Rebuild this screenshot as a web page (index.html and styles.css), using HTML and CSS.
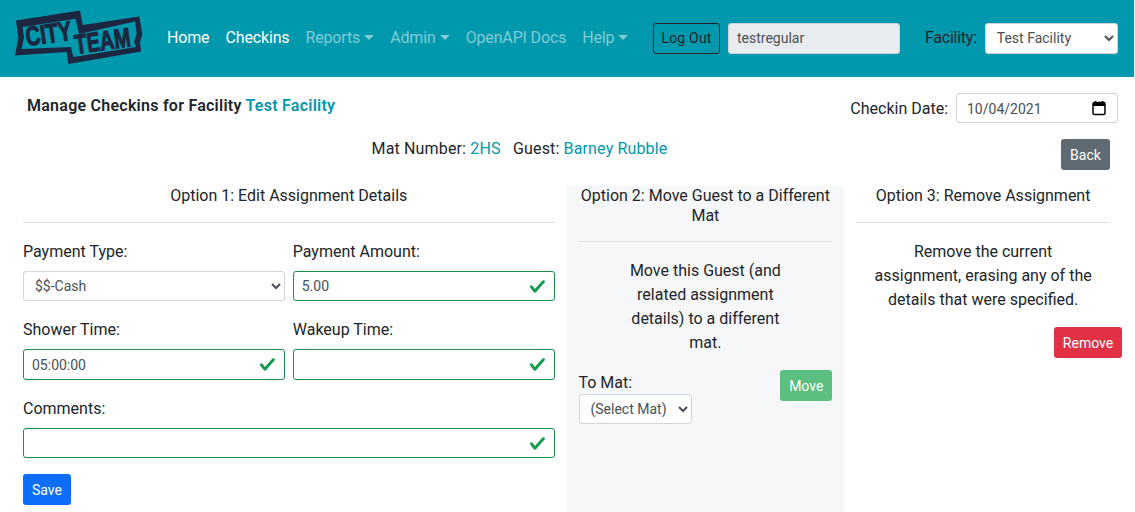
FILE: index.html
```html
<!DOCTYPE html>
<html>
<head>
    <meta charset="UTF-8">
    <title>Manage Checkins</title>
    <link rel="stylesheet" href="styles.css">
</head>
<body>
    <header class="topbar">
        <svg class="logo" width="130" height="55" viewBox="0 0 130 55">
            <path class="logo-dark" d="M2 10.5 L66 0.5 L68.7 15 L125.3 6.5 L128.3 24 L126 32 L127 41.5 L54.3 54 L52.7 42 L1 45.5 L4.3 28 Z"/>
            <path class="logo-light" d="M8.7 17 L61.7 8.8 L65 24 L121 11.5 L122.7 23.8 L120 32 L122 37 L59.3 47 L57 37 L7.7 39 L10 27 Z"/>
            <text class="logo-text" transform="translate(13 36) rotate(-8)" textLength="46" lengthAdjust="spacingAndGlyphs">CITY</text>
            <text class="logo-text" transform="translate(62 44) rotate(-8)" textLength="56" lengthAdjust="spacingAndGlyphs">TEAM</text>
        </svg>
        <nav class="nav">
            <a class="nav-link active">Home</a>
            <a class="nav-link active">Checkins</a>
            <a class="nav-link caret">Reports</a>
            <a class="nav-link caret">Admin</a>
            <a class="nav-link">OpenAPI Docs</a>
            <a class="nav-link caret">Help</a>
        </nav>
        <button class="btn btn-logout">Log Out</button>
        <input class="control user-box" type="text" value="testregular" readonly>
        <label class="facility-label">Facility:</label>
        <select class="control select facility-select"><option>Test Facility</option></select>
    </header>

    <main class="content">
        <div class="title-row">
            <h1 class="page-title">Manage Checkins for Facility <span class="teal">Test Facility</span></h1>
            <div class="date-box">
                <label class="date-label">Checkin Date:</label>
                <div class="control date-input">
                    <span class="date-value">10/04/2021</span>
                    <svg width="16" height="16" viewBox="0 0 16 16"><path d="M4.5 1v2M11.5 1v2" stroke="#000" stroke-width="1.6" fill="none"/><rect x="2" y="2.5" width="12" height="12" rx="1.5" stroke="#000" stroke-width="1.5" fill="none"/><rect x="2" y="2.5" width="12" height="3.5" fill="#000"/></svg>
                </div>
            </div>
        </div>

        <div class="guest-row">
            <p class="guest-info">Mat Number: <span class="teal">2HS</span> &nbsp; Guest: <span class="teal">Barney Rubble</span></p>
            <button class="btn btn-back">Back</button>
        </div>

        <div class="options">
            <section class="option">
                <h2 class="option-title">Option 1: Edit Assignment Details</h2>
                <hr class="rule">
                <div class="form-grid">
                    <div class="field">
                        <label>Payment Type:</label>
                        <select class="control select"><option>$$-Cash</option></select>
                    </div>
                    <div class="field">
                        <label>Payment Amount:</label>
                        <input class="control valid" type="text" value="5.00">
                    </div>
                    <div class="field">
                        <label>Shower Time:</label>
                        <input class="control valid tall" type="text" value="05:00:00">
                    </div>
                    <div class="field">
                        <label>Wakeup Time:</label>
                        <input class="control valid tall" type="text">
                    </div>
                    <div class="field wide">
                        <label>Comments:</label>
                        <input class="control valid" type="text">
                    </div>
                </div>
                <button class="btn btn-save">Save</button>
            </section>

            <section class="option option-move">
                <h2 class="option-title">Option 2: Move Guest to a Different Mat</h2>
                <hr class="rule">
                <p class="option-text move-text">Move this Guest (and related assignment details) to a different mat.</p>
                <div class="move-row">
                    <div class="move-field">
                        <label>To Mat:</label>
                        <select class="control select mat-select"><option>(Select Mat)</option></select>
                    </div>
                    <button class="btn btn-move">Move</button>
                </div>
            </section>

            <section class="option">
                <h2 class="option-title">Option 3: Remove Assignment</h2>
                <hr class="rule">
                <p class="option-text remove-text">Remove the current assignment, erasing any of the details that were specified.</p>
                <div class="remove-row">
                    <button class="btn btn-remove">Remove</button>
                </div>
            </section>
        </div>
    </main>
</body>
</html>
```

FILE: styles.css
```css
* {
    box-sizing: border-box;
}

html, body {
    height: 100%;
    overflow: hidden;
}

body {
    margin: 0;
    width: 1134px;
    font-family: Roboto, "Liberation Sans", sans-serif;
    font-size: 16px;
    line-height: 24px;
    color: #212529;
    background-color: #fff;
}

.teal {
    color: #0098ad;
}

/* top bar */
.topbar {
    display: flex;
    align-items: center;
    height: 77px;
    padding: 0 16px 1px 14px;
    background-color: #0098ad;
}

.logo {
    flex: none;
    margin-top: -2px;
    overflow: visible;
}

.logo-dark {
    fill: #1c2640;
}

.logo-light {
    fill: #0098ad;
}

.logo-text {
    font-family: "Liberation Sans", sans-serif;
    font-weight: bold;
    font-size: 27px;
    fill: #1c2640;
    stroke: #1c2640;
    stroke-width: 1.1px;
}

.nav {
    display: flex;
    flex: none;
    width: 494px;
    margin-left: 15px;
    letter-spacing: -0.15px;
}

.nav-link {
    padding: 0 8px;
    color: rgba(255, 255, 255, 0.5);
}

.nav-link.active {
    color: #fff;
}

.caret::after {
    content: "";
    display: inline-block;
    margin-left: 4px;
    vertical-align: 3px;
    border-top: 5px solid;
    border-left: 5px solid transparent;
    border-right: 5px solid transparent;
}

.btn {
    height: 31px;
    padding: 0;
    border: 1px solid transparent;
    border-radius: 3px;
    font-family: inherit;
    font-size: 14px;
    white-space: nowrap;
    color: #fff;
}

.btn-logout {
    flex: none;
    width: 67px;
    letter-spacing: 0.2px;
    color: #212529;
    background-color: transparent;
    border-color: #212529;
}

.control {
    display: block;
    width: 100%;
    height: 30px;
    padding: 0 8px;
    border: 1px solid #ced4da;
    border-radius: 3px;
    background-color: #fff;
    font-family: inherit;
    font-size: 14px;
    color: #495057;
    outline: none;
}

.user-box {
    flex: none;
    width: 172px;
    height: 31px;
    margin-left: 8px;
    background-color: #e9ecef;
}

.facility-label {
    margin-left: 25px;
    letter-spacing: -0.25px;
}

.facility-select {
    flex: none;
    width: 133px;
    height: 31px;
    margin-left: 8px;
}

.select {
    padding-left: 7px;
}

/* page content */
.content {
    padding: 16px 12px 0 11px;
}

.title-row {
    display: flex;
    justify-content: space-between;
    height: 46px;
    padding-right: 4px;
}

.page-title {
    margin: 1px 0 0 16px;
    font-size: 16px;
    font-weight: 600;
    letter-spacing: 0.25px;
}

.date-box {
    display: flex;
    align-items: center;
    height: 30px;
    gap: 8px;
}

.date-label {
    padding-top: 2px;
}

.date-input {
    display: flex;
    align-items: center;
    justify-content: space-between;
    width: 162px;
    padding: 0 10px;
}

.date-value {
    padding-top: 2px;
}

.guest-row {
    display: flow-root;
    position: relative;
    height: 47px;
}

.guest-info {
    margin: -2px 0 0;
    padding: 0 98px 0 4px;
    letter-spacing: 0.15px;
    text-align: center;
}

.btn-back {
    position: absolute;
    top: 0;
    right: 12px;
    width: 49px;
    background-color: #5f6a72;
}

.options {
    display: grid;
    grid-template-columns: 2fr 1fr 1fr;
    height: 330px;
}

.option {
    padding: 0 12px;
}

.option-move {
    background-color: #f6f7f9;
}

.option-title {
    margin: 0;
    font-size: 16px;
    font-weight: 400;
    line-height: 20px;
    text-align: center;
}

.rule {
    height: 1px;
    margin: 16px 0;
    border: none;
    background-color: #dee2e6;
}

.option-move .rule {
    margin: 15px 0 17px;
}

.form-grid {
    display: grid;
    grid-template-columns: 1fr 1fr;
    gap: 16px 8px;
}

.field label {
    display: block;
    height: 32px;
    padding-top: 1px;
}

.wide {
    grid-column: span 2;
}

.valid {
    border-color: #198f4b;
    background-image: url("data:image/svg+xml,%3Csvg xmlns='http://www.w3.org/2000/svg' viewBox='0 0 8 8'%3E%3Cpath fill='%23129a4b' d='M2.3 6.73L.6 4.53c-.4-1.04.46-1.4 1.1-.8l1.1 1.4 3.4-3.8c.6-.63 1.6-.27 1.2.7l-4 4.6c-.43.5-.8.4-1.1.1z'/%3E%3C/svg%3E");
    background-repeat: no-repeat;
    background-position: right 8px center;
    background-size: 17px 17px;
}

.tall {
    height: 31px;
}

.btn-save {
    width: 48px;
    margin-top: 16px;
    background-color: #0d6efd;
}

.option-text {
    margin: 0 auto;
    text-align: center;
}

.move-text {
    width: 180px;
}

.remove-text {
    width: 225px;
    padding-top: 1px;
}

.move-row {
    display: flex;
    justify-content: space-between;
    margin-top: 15px;
}

.move-field label {
    display: block;
    height: 24px;
    padding-top: 1px;
}

.mat-select {
    width: 113px;
}

.btn-move {
    width: 52px;
    background-color: #5cbf80;
}

.remove-row {
    display: flex;
    justify-content: flex-end;
    margin: 15px -12px 0 0;
}

.btn-remove {
    width: 68px;
    background-color: #e23145;
}
```
